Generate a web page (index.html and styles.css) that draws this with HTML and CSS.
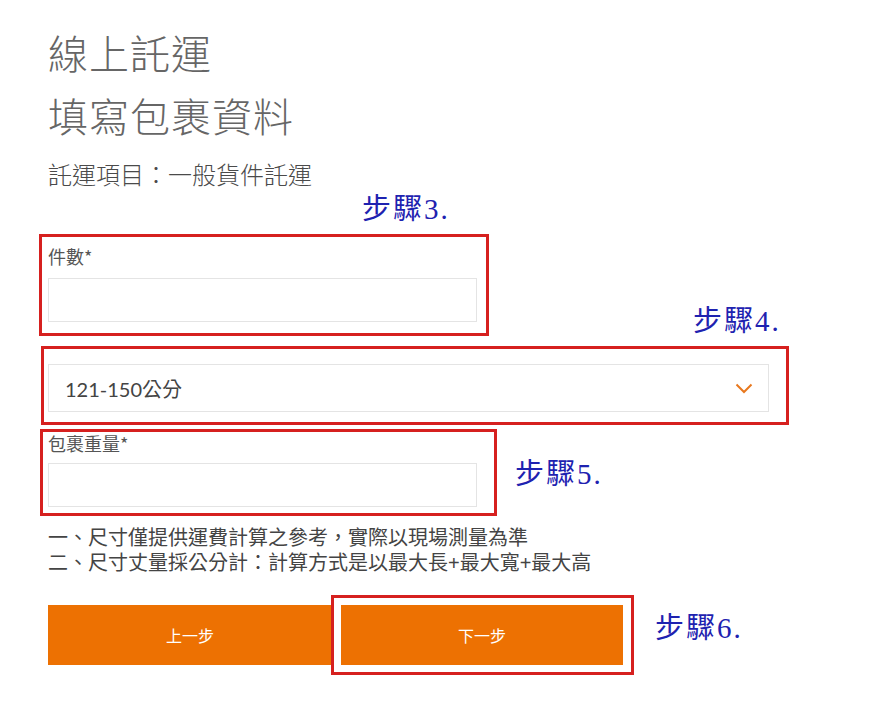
FILE: index.html
```html
<!DOCTYPE html>
<html lang="zh-Hant">
<head>
    <meta charset="UTF-8">
    <meta name="viewport" content="width=device-width, initial-scale=1.0">
    <title>線上託運</title>
    <link rel="stylesheet" href="styles.css">
</head>
<body>
    <div class="page">
        <h1 class="title">線上託運</h1>
        <h2 class="subtitle">填寫包裹資料</h2>
        <p class="service">託運項目：一般貨件託運</p>

        <div class="mark mark-count">
            <span class="step step-3">步驟3.</span>
            <label class="field-label" for="count">件數*</label>
            <input class="field-input" id="count" type="text">
        </div>

        <div class="mark mark-size">
            <span class="step step-4">步驟4.</span>
            <div class="select">
                <span class="select-value">121-150公分</span>
                <svg class="chevron" width="18" height="11" viewBox="0 0 18 11">
                    <polyline points="1.5,1.5 9,9 16.5,1.5" fill="none" stroke="#e8781e" stroke-width="2"/>
                </svg>
            </div>
        </div>

        <div class="mark-row">
            <div class="mark mark-weight">
                <label class="field-label field-label-tight" for="weight">包裹重量*</label>
                <input class="field-input" id="weight" type="text">
            </div>
            <span class="step step-5">步驟5.</span>
        </div>

        <div class="notes">
            <p>一、尺寸僅提供運費計算之參考，實際以現場測量為準</p>
            <p>二、尺寸丈量採公分計：計算方式是以最大長+最大寬+最大高</p>
        </div>

        <div class="actions">
            <button class="btn btn-prev">上一步</button>
            <div class="mark mark-next">
                <button class="btn btn-next">下一步</button>
            </div>
            <span class="step step-6">步驟6.</span>
        </div>
    </div>
</body>
</html>
```

FILE: styles.css
```css
body {
    margin: 0;
    background-color: #fff;
    font-family: "Noto Sans CJK TC", "Noto Sans", sans-serif;
    color: #444;
}

.page {
    padding: 28px 0 0 48px;
}

.title,
.subtitle {
    margin: 0;
    font-family: "Noto Sans CJK TC Light", "Noto Sans CJK TC DemiLight", "Noto Sans CJK TC", sans-serif;
    font-size: 40px;
    line-height: 48px;
    font-weight: 300;
    letter-spacing: 1px;
    color: #666;
}

.subtitle {
    margin-top: 15px;
}

.service {
    margin: 19px 0 0;
    font-size: 24px;
    line-height: 32px;
    font-weight: 300;
    color: #4a4a4a;
}

/* red annotation frames */
.mark {
    position: relative;
    border: 3px solid #d6201f;
    box-sizing: border-box;
}

.mark-count {
    margin: 44px 0 0 -9px;
    width: 450px;
    padding: 7px 9px 11px 6px;
}

.mark-size {
    margin: 10px 0 0 -7px;
    width: 748px;
    padding: 15px 17px 10px 4px;
}

.mark-row {
    display: flex;
    align-items: center;
    margin: 4px 0 0 -8px;
}

.mark-weight {
    width: 457px;
    padding: 0 17px 6px 5px;
}

.mark-next {
    margin-left: -1px;
    padding: 7px 8px 7px 7px;
}

.step {
    font-family: "Liberation Serif", "Noto Sans CJK TC", serif;
    font-size: 29px;
    line-height: 32px;
    letter-spacing: 2px;
    color: #1e22b0;
    white-space: nowrap;
}

.step-3 {
    position: absolute;
    left: 320px;
    top: -44px;
}

.step-4 {
    position: absolute;
    left: 649px;
    top: -44px;
}

.step-5 {
    margin: 3px 0 0 18px;
}

.step-6 {
    margin: 0 0 14px 21px;
}

.field-label {
    display: block;
    font-size: 18px;
    line-height: 24px;
    color: #555;
}

.field-label-tight {
    line-height: 22px;
}

.field-input {
    display: block;
    box-sizing: border-box;
    width: 429px;
    height: 44px;
    margin-top: 10px;
    border: 1px solid #e4e4e4;
    background: #fff;
    outline: none;
}

.mark-weight .field-input {
    margin-top: 9px;
}

.select {
    box-sizing: border-box;
    width: 721px;
    height: 48px;
    border: 1px solid #e4e4e4;
    display: flex;
    align-items: center;
    justify-content: space-between;
    padding: 0 15px 0 16px;
}

.select-value {
    font-family: Lato, "Noto Sans CJK TC", sans-serif;
    font-size: 20px;
    color: #444;
}

.chevron {
    display: block;
}

.notes {
    margin-top: 10px;
    font-family: "Liberation Sans", "Noto Sans CJK TC", sans-serif;
    font-size: 20px;
    line-height: 25px;
    color: #444;
}

.notes p {
    margin: 0;
}

.actions {
    display: flex;
    align-items: center;
    margin-top: 19px;
}

.btn {
    display: block;
    height: 60px;
    border: none;
    background-color: #ed7102;
    color: #fff;
    font-family: "Noto Sans CJK TC", sans-serif;
    font-size: 16px;
    cursor: pointer;
}

.btn-prev {
    width: 284px;
}

.btn-next {
    width: 282px;
}
```
